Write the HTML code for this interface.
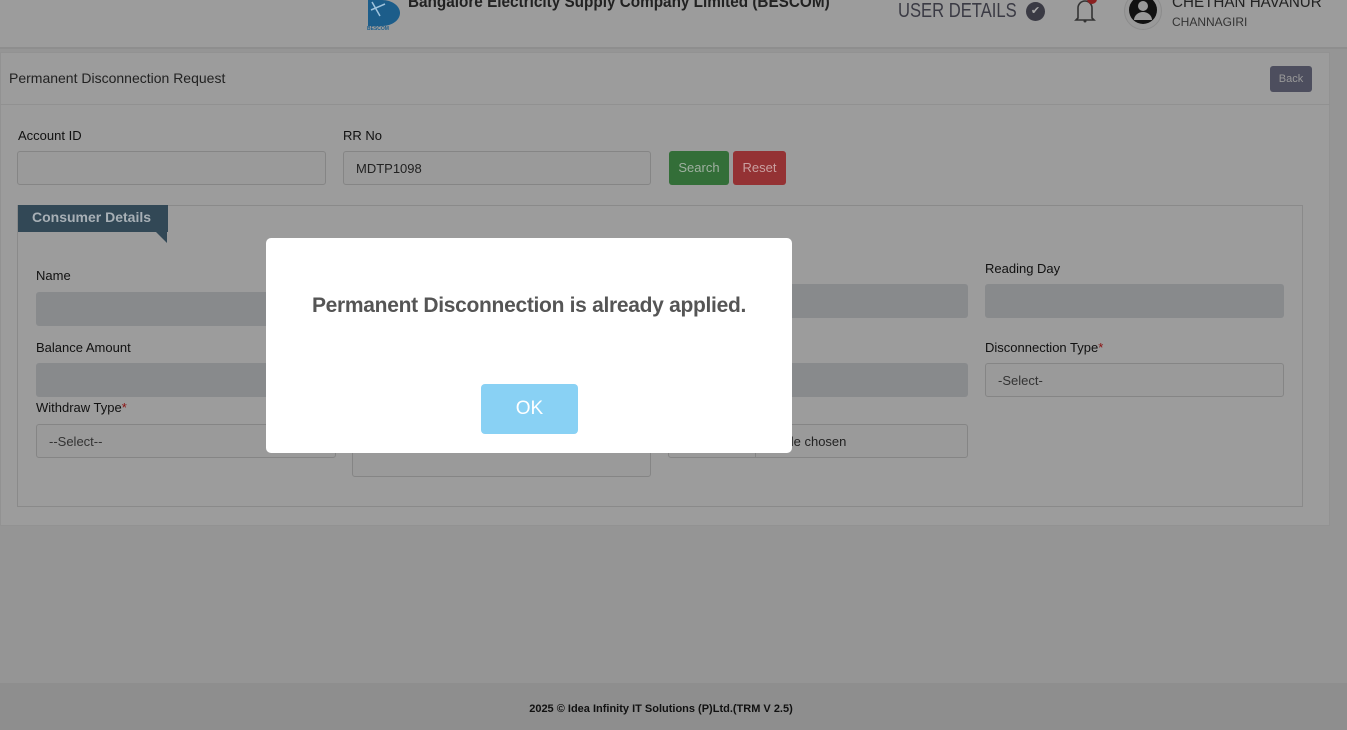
<!DOCTYPE html>
<html><head><meta charset="utf-8"><style>
*{box-sizing:border-box;margin:0;padding:0}
body{width:1347px;height:730px;overflow:hidden;background:#959595;font-family:"Liberation Sans",sans-serif;position:relative;color:#1a1a1a}
.a{position:absolute}
.lbl{font-size:13px;color:#111}
.inp{position:absolute;border:1px solid #858585;border-radius:3px;background:#9a9a9a;font-size:13px;color:#222;padding-left:12px;display:flex;align-items:center}
.dis{background:#888a8c;border-color:#888a8c}
.req{color:#8b1010}
.sq{transform-origin:0 0;white-space:nowrap}
</style></head><body>
<div class="a" style="left:0;top:0;width:1347px;height:49px;background:#9c9c9c;border-bottom:2px solid #8e8e8e"></div>
<svg class="a" style="left:366px;top:0" width="40" height="30" viewBox="0 0 40 30"><path d="M2 0h14c10 0 18 6 18 13s-8 13-18 13H2z" fill="#1c5d8a"/><path d="M6 2l8 14M5 10l14 -6" stroke="#9fc3dd" stroke-width="1.5"/><text x="1" y="30" font-size="5" fill="#1c5d8a" font-weight="bold" font-family="Liberation Sans">BESCOM</text></svg>
<div class="a sq" style="left:408px;top:-8px;font-size:17px;font-weight:bold;color:#222;transform:scaleX(0.9)">Bangalore Electricity Supply Company Limited (BESCOM)</div>
<div class="a sq" style="left:898px;top:0;font-size:20px;color:#3a3a44;transform:scaleX(0.83)">USER DETAILS</div>
<div class="a" style="left:1026px;top:2px;width:19px;height:19px;border-radius:50%;background:#3a3a44;color:#aaa;font-size:11px;text-align:center;line-height:19px">&#10004;</div>
<svg class="a" style="left:1072px;top:0" width="26" height="24" viewBox="0 0 26 24"><path d="M6 18V8a7 7 0 0 1 14 0v10l2 2H4z" fill="none" stroke="#333" stroke-width="1.6"/><circle cx="13" cy="21" r="1.5" fill="#333"/><circle cx="20" cy="-1" r="5" fill="#8a2020"/></svg>
<div class="a" style="left:1124px;top:-8px;width:38px;height:38px;border-radius:50%;background:#999;border:1px solid #8c8c8c"></div>
<svg class="a" style="left:1128px;top:-6px" width="30" height="32" viewBox="0 0 30 32"><circle cx="15" cy="16" r="14" fill="#111"/><circle cx="15" cy="12" r="5" fill="#999"/><path d="M6 26a9 8 0 0 1 18 0" fill="#999"/></svg>
<div class="a sq" style="left:1172px;top:-6px;font-size:16px;color:#222;transform:scaleX(0.95)">CHETHAN HAVANUR</div>
<div class="a" style="left:1172px;top:15px;font-size:12px;color:#333">CHANNAGIRI</div>

<div class="a" style="left:0;top:52px;width:1330px;height:474px;background:#9c9c9c;border:1px solid #929292"></div>
<div class="a" style="left:0;top:52px;width:1330px;height:53px;border-bottom:1px solid #919191"></div>
<div class="a" style="left:9px;top:70px;font-size:14px;color:#222">Permanent Disconnection Request</div>
<div class="a" style="left:1270px;top:66px;width:42px;height:26px;background:#4d4e5e;border-radius:3px;color:#999;font-size:11px;text-align:center;line-height:26px">Back</div>

<div class="a lbl" style="left:18px;top:128px">Account ID</div>
<div class="inp" style="left:17px;top:151px;width:309px;height:34px"></div>
<div class="a lbl" style="left:343px;top:128px">RR No</div>
<div class="inp" style="left:343px;top:151px;width:308px;height:34px">MDTP1098</div>
<div class="a" style="left:669px;top:151px;width:60px;height:34px;background:#336e38;border-radius:3px;color:#9fb0a0;font-size:13px;text-align:center;line-height:34px">Search</div>
<div class="a" style="left:733px;top:151px;width:53px;height:34px;background:#943234;border-radius:3px;color:#c9a0a0;font-size:13px;text-align:center;line-height:34px">Reset</div>

<div class="a" style="left:17px;top:205px;width:1286px;height:302px;border:1px solid #8a8a8a"></div>
<div class="a" style="left:18px;top:205px;width:150px;height:27px;background:#324856;color:#a8b0b6;font-size:14px;font-weight:bold;padding-left:14px;line-height:24px">Consumer Details</div>
<div class="a" style="left:156px;top:232px;width:0;height:0;border-top:11px solid #324856;border-left:11px solid transparent"></div>

<div class="a lbl" style="left:36px;top:268px">Name</div>
<div class="inp dis" style="left:36px;top:292px;width:300px;height:34px"></div>
<div class="a lbl" style="left:36px;top:340px">Balance Amount</div>
<div class="inp dis" style="left:36px;top:363px;width:300px;height:34px"></div>
<div class="a lbl" style="left:36px;top:400px">Withdraw Type<span class="req">*</span></div>
<div class="inp" style="left:36px;top:424px;width:300px;height:34px;color:#333">--Select--</div>
<div class="inp" style="left:352px;top:424px;width:299px;height:53px"></div>
<div class="inp dis" style="left:668px;top:284px;width:300px;height:34px"></div>
<div class="inp dis" style="left:668px;top:363px;width:300px;height:34px"></div>
<div class="inp" style="left:668px;top:424px;width:300px;height:34px;padding-left:0"><div style="width:87px;height:100%;border-right:1px solid #858585"></div><span style="margin-left:8px">No file chosen</span></div>
<div class="a lbl" style="left:985px;top:261px">Reading Day</div>
<div class="inp dis" style="left:985px;top:284px;width:299px;height:34px"></div>
<div class="a lbl" style="left:985px;top:340px">Disconnection Type<span class="req">*</span></div>
<div class="inp" style="left:985px;top:363px;width:299px;height:34px;color:#333">-Select-</div>

<div class="a" style="left:0;top:683px;width:1347px;height:47px;background:#8e8e8e"></div>
<div class="a" style="left:0;top:703px;width:1322px;text-align:center;font-size:11px;font-weight:bold;color:#111">2025 © Idea Infinity IT Solutions (P)Ltd.(TRM V 2.5)</div>

<div class="a" style="left:266px;top:238px;width:526px;height:215px;background:#fff;border-radius:5px"></div>
<div class="a" style="left:266px;top:294px;width:526px;text-align:center;font-size:21px;font-weight:bold;color:#555;letter-spacing:-0.3px">Permanent Disconnection is already applied.</div>
<div class="a" style="left:481px;top:384px;width:97px;height:50px;background:#89d1f4;border-radius:4px;color:#fff;font-size:19px;text-align:center;line-height:50px">OK</div>
</body></html>
